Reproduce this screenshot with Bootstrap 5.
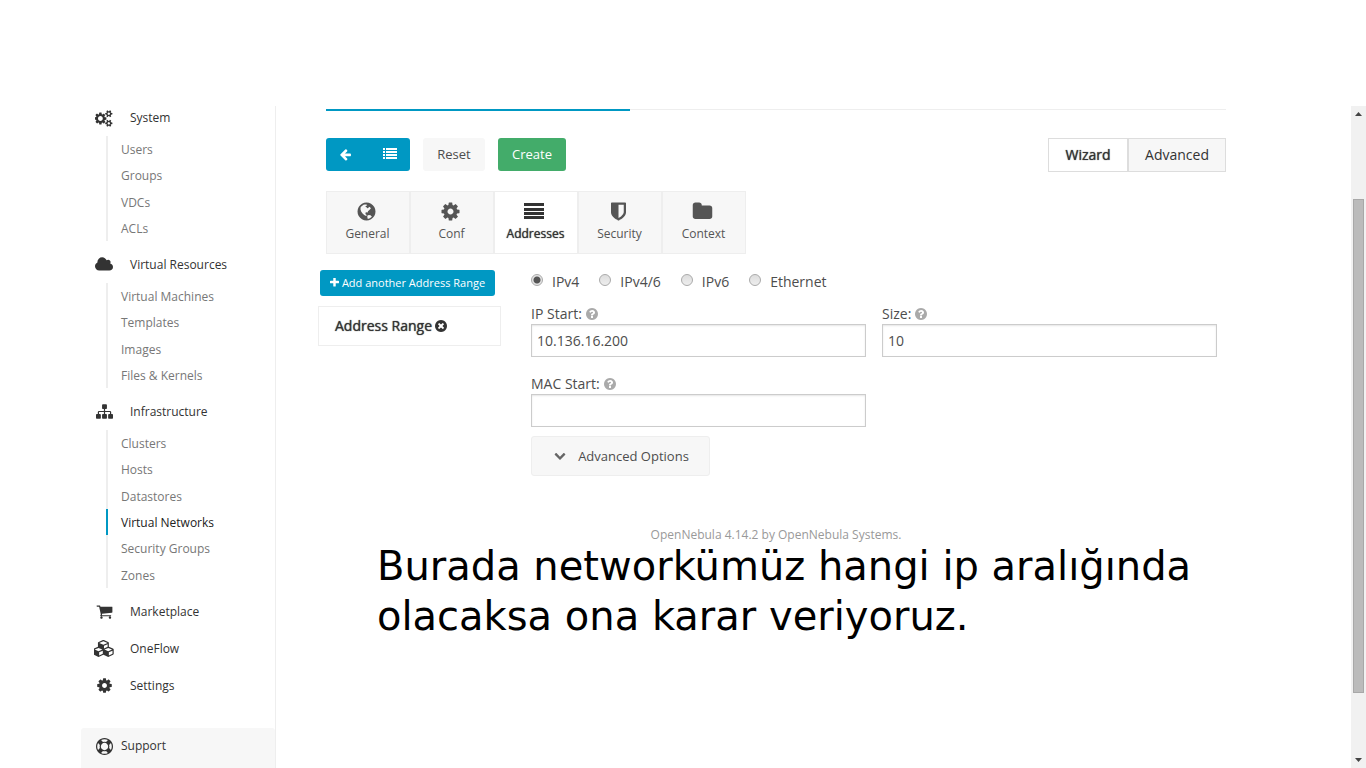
<!DOCTYPE html>
<html lang="en">
<head>
<meta charset="utf-8">
<meta name="viewport" content="width=device-width, initial-scale=1">
<title>OpenNebula Sunstone</title>
<link href="https://cdn.jsdelivr.net/npm/bootstrap@5.3.0/dist/css/bootstrap.min.css" rel="stylesheet">
<style>
body{font-family:"Open Sans",sans-serif;font-size:14px;line-height:20px;color:#4d4d4d;background:#fff}
a{text-decoration:none;color:inherit}
svg{display:block;fill:currentColor}
button{font-family:inherit}
.page-top{padding-top:106px}
.side{flex:0 0 195px;margin-left:81px;border-right:1px solid #eee;font-size:12px;line-height:16px;color:#333}
.side-head{height:37px;padding-left:13px}
.side-head .ico{width:20px;margin-right:16px;display:flex;justify-content:center}
.side-head.first{height:30px;padding-bottom:6px}
.side-sub{margin:0 0 5px 25px}
.side-sub li{height:26px;border-left:2px solid #eee;padding:2px 0 0 13px;display:flex;align-items:center;color:#777}
.side-sub li:nth-child(3n){height:27px}
.side-sub li.current{border-color:#0098c3;color:#222}
.support{margin-top:24px;height:40px;background:#f7f7f7;padding:0 0 4px 13px;border-radius:3px 3px 0 0;font-size:12px}
.support .ico{width:20px;margin-right:7px;display:flex;justify-content:center}
.main-area{padding:3px 125px 0 50px;min-width:0}
.tab-line{border-top:1px solid #eee;height:2px;margin-bottom:27px}
.tab-line div{width:304px;height:2px;margin-top:-1px;background:#0098c3}
.btn-flat{border:0;border-radius:3px;height:33px;font-size:13px;line-height:20px;color:#fff;display:flex;align-items:center;justify-content:center;padding:0 0 1px}
.blue{background:#0098c3}
.w-back{width:39px;border-radius:3px 0 0 3px}
.w-list{width:45px;padding-left:5px;border-radius:0 3px 3px 0}
.w-reset{width:62px;margin:0 13px;background:#f7f7f7;color:#4d4d4d}
.w-create{width:68px;background:#43ac6a}
.mode button{height:34px;border:1px solid #ddd;background:#f7f7f7;color:#333;padding:0;width:98px}
.mode .on{background:#fff;width:80px}
.faux{text-shadow:0 0 1px currentColor}
.steps{margin-top:19px}
.steps button{width:84px;height:63px;border:1px solid #eee;background:#f7f7f7;color:#555;font-size:12px;line-height:18px;padding:0 1px 2px 0}
.steps .on{background:#fff;color:#333}
.steps svg{margin:0 0 3px 29px}
.body-row{margin:16px 0 0 -8px}
.ranges{flex:0 0 205px}
.add-range{height:26px;width:175px;margin-left:2px;font-size:11px;margin-bottom:10px;gap:3px}
.range-item{width:183px;height:40px;border:1px solid #eee;padding-left:16px;color:#333;gap:3px}
.form-area{padding-right:1px}
.types{height:24px;gap:20px;padding-left:8px}
.types label{margin-left:9px}
.types input{appearance:none;width:12px;height:12px;margin:0 0 4px;border:1px solid #aaa;border-radius:50%;background:linear-gradient(#ddd,#eee)}
.types input:checked{background:radial-gradient(circle,#555 0 3px,#e4e4e4 4px)}
.fields{margin-top:10px;row-gap:17px}
.field{padding:0 8px}
.field label{display:flex;align-items:center;gap:4px;height:20px}
.field label svg{color:#aaa}
.field input{width:100%;height:33px;border:1px solid #ccc;border-radius:0;padding:0 5px;color:#4d4d4d;font-size:14px;box-shadow:inset 0 1px 2px rgba(0,0,0,.1)}
.adv{width:179px;height:40px;margin:9px 0 0 8px;border:1px solid #eee;background:#f7f7f7;border-radius:3px;color:#4d4d4d;font-size:13px;gap:12px;padding:0 0 0 2px}
.adv svg{color:#666}
.foot{margin-top:53px;font-size:12px;line-height:12px;color:#999}
.caption-text{margin:0 0 0 51px;font:40px/50px "DejaVu Sans",sans-serif;color:#000}
.scroll{flex:0 0 15px;background:#f1f1f1;color:#444}
.scroll svg{margin:5px auto}
.thumb{width:11px;background:#bbb;border:1px solid #a8a8a8;flex:494 0 0}
.gap-above{flex:77 0 0}
.gap-below{flex:59 0 0}
</style>
</head>
<body>
<svg width="0" height="0" class="position-absolute" aria-hidden="true">
<symbol id="cog" viewBox="0 0 1792 1792"><path d="M1152 896q0-106-75-181t-181-75-181 75-75 181 75 181 181 75 181-75 75-181zm512-109v222q0 12-8 23t-20 13l-185 28q-19 54-39 91 35 50 107 138 10 12 10 25t-9 23q-27 37-99 108t-94 71q-12 0-26-9l-138-108q-44 23-91 38-16 136-29 186-7 28-36 28h-222q-14 0-24.500-8.500t-11.500-21.500l-28-184q-49-16-90-37l-141 107q-10 9-25 9-14 0-25-11-126-114-165-168-7-10-7-23 0-12 8-23 15-21 51-66.500t54-70.500q-27-50-41-99l-183-27q-13-2-21-12.500t-8-23.500v-222q0-12 8-23t19-13l186-28q14-46 39-92-40-57-107-138-10-12-10-24 0-10 9-23 26-36 98.500-107.500t94.500-71.500q13 0 26 10l138 107q44-23 91-38 16-136 29-186 7-28 36-28h222q14 0 24.500 8.500t11.500 21.500l28 184q49 16 90 37l142-107q9-9 24-9 13 0 25 10 129 119 165 170 7 8 7 22 0 12-8 23-15 21-51 66.500t-54 70.500q26 50 41 98l183 28q13 2 21 12.500t8 23.500z"/></symbol>
<symbol id="help" viewBox="128 128 1536 1536"><path d="M1024 1376v-192q0-14-9-23t-23-9h-192q-14 0-23 9t-9 23v192q0 14 9 23t23 9h192q14 0 23-9t9-23zm256-672q0-88-55.500-163t-138.500-116-170-41q-243 0-371 213-15 24 8 42l132 100q7 6 19 6 16 0 25-12 53-68 86-92 34-24 86-24 48 0 85.500 26t37.500 59q0 38-20 61t-68 45q-63 28-115.500 86.500t-52.500 125.500v36q0 14 9 23t23 9h192q14 0 23-9t9-23q0-19 21.500-49.500t54.500-49.500q32-18 49-28.500t46-35 44.500-48 28-60.500 12.500-81zm384 192q0 209-103 385.500t-279.500 279.500-385.500 103-385.500-103-279.500-279.500-103-385.500 103-385.500 279.500-279.500 385.500-103 385.500 103 279.500 279.500 103 385.500z"/></symbol>
</svg>

<div class="page-top d-flex min-vh-100">
  <nav class="side" aria-label="Main">
    <a href="#" class="side-head first d-flex align-items-center"><span class="ico"><svg width="18" height="17" viewBox="0 0 1920 1792"><path d="M832 896q0-106-75-181t-181-75-181 75-75 181 75 181 181 75 181-75 75-181zm768 512q0-52-38-90t-90-38-90 38-38 90q0 53 37.500 90.500t90.500 37.500 90.500-37.500 37.500-90.500zm0-1024q0-52-38-90t-90-38-90 38-38 90q0 53 37.500 90.500t90.500 37.500 90.500-37.500 37.500-90.500zm-384 421v185q0 10-7 19.500t-16 10.500l-155 24q-11 35-32 76 34 48 90 115 7 11 7 20 0 12-7 19-23 30-82.500 89.500t-78.500 59.500q-11 0-21-7l-115-90q-37 19-77 31-11 108-23 155-7 24-30 24h-186q-11 0-20-7.500t-10-17.500l-23-153q-34-10-75-31l-118 89q-7 7-20 7-11 0-21-8-144-133-144-160 0-9 7-19 10-14 41-53t47-61q-23-44-35-82l-152-24q-10-1-17-9.500t-7-19.500v-185q0-10 7-19.500t16-10.500l155-24q11-35 32-76-34-48-90-115-7-11-7-20 0-12 7-20 22-30 82-89t79-59q11 0 21 7l115 90q34-18 77-32 11-108 23-154 7-24 30-24h186q11 0 20 7.500t10 17.500l23 153q34 10 75 31l118-89q8-7 20-7 11 0 21 8 144 133 144 160 0 8-7 19-12 16-42 54t-45 60q23 48 34 82l152 23q10 2 17 10.500t7 19.500zm640 533v140q0 16-149 31-12 27-30 52 51 113 51 138 0 4-4 7-122 71-124 71-8 0-46-47t-52-68q-20 2-30 2t-30-2q-14 21-52 68t-46 47q-2 0-124-71-4-3-4-7 0-25 51-138-18-25-30-52-149-15-149-31v-140q0-16 149-31 13-29 30-52-51-113-51-138 0-4 4-7 4-2 35-20t59-34 30-16q8 0 46 46.500t52 67.500q20-2 30-2t30 2q51-71 92-112l6-2q4 0 124 70 4 3 4 7 0 25-51 138 17 23 30 52 149 15 149 31zm0-1024v140q0 16-149 31-12 27-30 52 51 113 51 138 0 4-4 7-122 71-124 71-8 0-46-47t-52-68q-20 2-30 2t-30-2q-14 21-52 68t-46 47q-2 0-124-71-4-3-4-7 0-25 51-138-18-25-30-52-149-15-149-31v-140q0-16 149-31 13-29 30-52-51-113-51-138 0-4 4-7 4-2 35-20t59-34 30-16q8 0 46 46.500t52 67.500q20-2 30-2t30 2q51-71 92-112l6-2q4 0 124 70 4 3 4 7 0 25-51 138 17 23 30 52 149 15 149 31z"/></svg></span>System</a>
    <ul class="side-sub list-unstyled">
      <li><a href="#">Users</a></li><li><a href="#">Groups</a></li><li><a href="#">VDCs</a></li><li><a href="#">ACLs</a></li>
    </ul>
    <a href="#" class="side-head d-flex align-items-center"><span class="ico"><svg width="18" height="17" viewBox="64 0 1920 1792"><path d="M1984 1152q0 159-112.500 271.500t-271.500 112.500h-1088q-185 0-316.500-131.500t-131.500-316.500q0-132 71-241.500t187-163.500q-2-28-2-43 0-212 150-362t362-150q158 0 286.500 88t187.500 230q70-62 166-62 106 0 181 75t75 181q0 75-41 138 129 30 213 134.500t84 239.500z"/></svg></span>Virtual Resources</a>
    <ul class="side-sub list-unstyled">
      <li><a href="#">Virtual Machines</a></li><li><a href="#">Templates</a></li><li><a href="#">Images</a></li><li><a href="#">Files &amp; Kernels</a></li>
    </ul>
    <a href="#" class="side-head d-flex align-items-center"><span class="ico"><svg width="17" height="17" viewBox="0 0 1792 1792"><path d="M1792 1248v320q0 40-28 68t-68 28h-320q-40 0-68-28t-28-68v-320q0-40 28-68t68-28h96v-192h-512v192h96q40 0 68 28t28 68v320q0 40-28 68t-68 28h-320q-40 0-68-28t-28-68v-320q0-40 28-68t68-28h96v-192h-512v192h96q40 0 68 28t28 68v320q0 40-28 68t-68 28h-320q-40 0-68-28t-28-68v-320q0-40 28-68t68-28h96v-192q0-52 38-90t90-38h512v-192h-96q-40 0-68-28t-28-68v-320q0-40 28-68t68-28h320q40 0 68 28t28 68v320q0 40-28 68t-68 28h-96v192h512q52 0 90 38t38 90v192h96q40 0 68 28t28 68z"/></svg></span>Infrastructure</a>
    <ul class="side-sub list-unstyled">
      <li><a href="#">Clusters</a></li><li><a href="#">Hosts</a></li><li><a href="#">Datastores</a></li><li class="current"><a href="#">Virtual Networks</a></li><li><a href="#">Security Groups</a></li><li><a href="#">Zones</a></li>
    </ul>
    <a href="#" class="side-head d-flex align-items-center"><span class="ico"><svg width="17" height="17" viewBox="0 0 1792 1792"><path d="M704 1536q0 52-38 90t-90 38-90-38-38-90 38-90 90-38 90 38 38 90zm896 0q0 52-38 90t-90 38-90-38-38-90 38-90 90-38 90 38 38 90zm128-1088v512q0 24-16.500 42.500t-40.500 21.500l-1044 122q13 60 13 70 0 16-24 64h920q26 0 45 19t19 45-19 45-45 19h-1024q-26 0-45-19t-19-45q0-11 8-31.500t16-36 21.500-40 15.500-29.500l-177-823h-204q-26 0-45-19t-19-45 19-45 45-19h256q16 0 28.500 6.500t19.500 15.500 13 24.500 8 26 5.500 29.500 4.500 26h1201q26 0 45 19t19 45z"/></svg></span>Marketplace</a>
    <a href="#" class="side-head d-flex align-items-center"><span class="ico"><svg width="20" height="17" viewBox="128 0 2048 1792"><path d="M640 1632l384-192v-314l-384 164v342zm-64-454l404-173-404-173-404 173zm1088 454l384-192v-314l-384 164v342zm-64-454l404-173-404-173-404 173zm-448-293l384-165v-266l-384 164v267zm-64-379l441-189-441-189-441 189zm1088 518v416q0 36-19 67t-52 47l-448 224q-25 14-57 14t-57-14l-448-224q-5-2-7-4-2 2-7 4l-448 224q-25 14-57 14t-57-14l-448-224q-33-16-52-47t-19-67v-416q0-38 21.500-70t56.500-48l434-186v-400q0-38 21.500-70t56.500-48l448-192q23-10 50-10t50 10l448 192q35 16 56.500 48t21.500 70v400l434 186q36 16 57 48t21 70z"/></svg></span>OneFlow</a>
    <a href="#" class="side-head d-flex align-items-center"><span class="ico"><svg width="17" height="17"><use href="#cog"/></svg></span>Settings</a>
    <a href="#" class="support d-flex align-items-center"><span class="ico"><svg width="17" height="17" viewBox="0 0 1792 1792"><path d="M896 0q182 0 348 71t286 191 191 286 71 348-71 348-191 286-286 191-348 71-348-71-286-191-191-286-71-348 71-348 191-286 286-191 348-71zm0 128q-190 0-361 90l194 194q82-28 167-28t167 28l194-194q-171-90-361-90zm-678 1129l194-194q-28-82-28-167t28-167l-194-194q-90 171-90 361t90 361zm678 407q190 0 361-90l-194-194q-82 28-167 28t-167-28l-194 194q171 90 361 90zm0-384q159 0 271.500-112.500t112.500-271.500-112.500-271.500-271.500-112.500-271.500 112.500-112.500 271.500 112.500 271.500 271.500 112.500zm484-217l194 194q90-171 90-361t-90-361l-194 194q28 82 28 167t-28 167z"/></svg></span>Support</a>
  </nav>

  <main class="main-area flex-grow-1">
    <div class="tab-line"><div></div></div>
    <div class="d-flex">
      <button type="button" class="btn-flat blue w-back" aria-label="Back"><svg width="13" height="13" viewBox="64 0 1700 1792"><path d="M1664 896v128q0 53-32.500 90.500t-84.500 37.500h-704l293 294q38 36 38 90t-38 90l-75 76q-37 37-90 37-52 0-91-37l-651-652q-37-37-37-90 0-52 37-91l651-650q38-38 91-38 52 0 90 38l75 74q38 38 38 91t-38 91l-293 293h704q52 0 84.500 37.500t32.500 90.500z"/></svg></button>
      <button type="button" class="btn-flat blue w-list" aria-label="List"><svg width="14" height="12" viewBox="0 0 14 12"><path d="M0 0h2v2H0zM3 0h11v2H3zM0 3h2v2H0zM3 3h11v2H3zM0 6h2v2H0zM3 6h11v2H3zM0 9h2v2H0zM3 9h11v2H3z"/></svg></button>
      <button type="button" class="btn-flat w-reset">Reset</button>
      <button type="button" class="btn-flat w-create">Create</button>
      <div class="mode ms-auto d-flex"><button type="button" class="on faux">Wizard</button><button type="button">Advanced</button></div>
    </div>
    <div class="steps d-flex">
      <button type="button"><svg width="21" height="21" viewBox="0 0 1792 1792"><path fill-rule="evenodd" d="M896 128q209 0 385.500 103t279.500 279.500 103 385.500-103 385.500-279.500 279.500-385.500 103-385.500-103-279.500-279.500-103-385.500 103-385.500 279.500-279.500 385.500-103zM640 310L400 520 380 700 440 900 560 1060 700 1200 860 1290 920 1200 820 1120 800 1010 900 960 1000 990 1020 880 1120 780 1270 650 1200 540 1100 500 1060 590 960 620 900 540 800 500 860 400 960 380 900 300 760 290zM1007 1526L1180 1480 1358 1337 1240 1220 1100 1190 980 1230 960 1340z"/></svg>General</button>
      <button type="button"><svg width="21" height="21"><use href="#cog"/></svg>Conf</button>
      <button type="button" class="on faux"><svg width="20" height="21" viewBox="0 0 20 21"><path d="M0 2h20v3H0zM0 7h20v3H0zM0 11h20v3H0zM0 15h20v3H0z"/></svg>Addresses</button>
      <button type="button"><svg width="21" height="21" viewBox="0 0 1792 1792"><path d="M1344 960v-640h-448v1137q119-63 213-137 235-184 235-360zm192-768v768q0 86-33.500 170.500t-83 150-118 127.500-126.500 103-121 77.500-89.500 49.500-42.500 20q-12 6-26 6t-26-6q-16-7-42.500-20t-89.500-49.500-121-77.500-126.500-103-118-127.500-83-150-33.500-170.500v-768q0-26 19-45t45-19h1152q26 0 45 19t19 45z"/></svg>Security</button>
      <button type="button"><svg width="21" height="21" viewBox="0 0 1792 1792"><path d="M1728 608v704q0 92-66 158t-158 66h-1216q-92 0-158-66t-66-158v-960q0-92 66-158t158-66h320q92 0 158 66t66 158v32h672q92 0 158 66t66 158z"/></svg>Context</button>
    </div>
    <div class="body-row d-flex">
      <div class="ranges">
        <button type="button" class="btn-flat blue add-range"><svg width="9" height="9" viewBox="192 192 1408 1408"><path d="M1600 736v192q0 40-28 68t-68 28h-416v416q0 40-28 68t-68 28h-192q-40 0-68-28t-28-68v-416h-416q-40 0-68-28t-28-68v-192q0-40 28-68t68-28h416v-416q0-40 28-68t68-28h192q40 0 68 28t28 68v416h416q40 0 68 28t28 68z"/></svg>Add another Address Range</button>
        <a href="#" class="range-item faux d-flex align-items-center">Address Range <svg width="12" height="12" viewBox="128 128 1536 1536"><path d="M1277 1122q0-26-19-45l-181-181 181-181q19-19 19-45 0-27-19-46l-90-90q-19-19-46-19-26 0-45 19l-181 181-181-181q-19-19-45-19-27 0-46 19l-90 90q-19 19-19 46 0 26 19 45l181 181-181 181q-19 19-19 45 0 27 19 46l90 90q19 19 46 19 26 0 45-19l181-181 181 181q19 19 45 19 27 0 46-19l90-90q19-19 19-46zm387-226q0 209-103 385.500t-279.500 279.500-385.500 103-385.500-103-279.500-279.500-103-385.500 103-385.500 279.500-279.500 385.500-103 385.500 103 279.500 279.500 103 385.500z"/></svg></a>
      </div>
      <form class="form-area flex-grow-1">
        <div class="types d-flex align-items-center">
          <div class="d-flex align-items-center"><input type="radio" name="t" id="t1" checked><label for="t1">IPv4</label></div>
          <div class="d-flex align-items-center"><input type="radio" name="t" id="t2"><label for="t2">IPv4/6</label></div>
          <div class="d-flex align-items-center"><input type="radio" name="t" id="t3"><label for="t3">IPv6</label></div>
          <div class="d-flex align-items-center"><input type="radio" name="t" id="t4"><label for="t4">Ethernet</label></div>
        </div>
        <div class="fields row g-0">
          <div class="col-6 field"><label for="ip">IP Start: <svg width="12" height="12"><use href="#help"/></svg></label><input type="text" id="ip" value="10.136.16.200"></div>
          <div class="col-6 field"><label for="size">Size: <svg width="12" height="12"><use href="#help"/></svg></label><input type="text" id="size" value="10"></div>
          <div class="col-6 field"><label for="mac">MAC Start: <svg width="12" height="12"><use href="#help"/></svg></label><input type="text" id="mac"></div>
        </div>
        <button type="button" class="adv d-flex align-items-center justify-content-center"><svg width="12" height="12" viewBox="90 90 1612 1792"><path d="M1683 808l-742 741q-19 19-45 19t-45-19l-742-741q-19-19-19-45.500t19-45.500l166-165q19-19 45-19t45 19l531 531 531-531q19-19 45-19t45 19l166 165q19 19 19 45.500t-19 45.500z"/></svg>Advanced Options</button>
      </form>
    </div>
    <footer class="foot text-center"><a href="#">OpenNebula 4.14.2</a> by <a href="#">OpenNebula Systems</a>.</footer>
    <p class="caption-text">Burada networkümüz hangi ip aralığında olacaksa ona karar veriyoruz.</p>
  </main>

  <div class="scroll d-flex flex-column align-items-center" aria-hidden="true">
    <svg width="7" height="6" viewBox="0 0 7 6"><path d="M0 5L3.500 1 7 5z"/></svg>
    <div class="gap-above"></div>
    <div class="thumb"></div>
    <div class="gap-below"></div>
    <svg width="7" height="6" viewBox="0 0 7 6"><path d="M0 1L3.500 5 7 1z"/></svg>
  </div>
</div>
<script src="https://cdn.jsdelivr.net/npm/bootstrap@5.3.0/dist/js/bootstrap.bundle.min.js"></script>
</body>
</html>
